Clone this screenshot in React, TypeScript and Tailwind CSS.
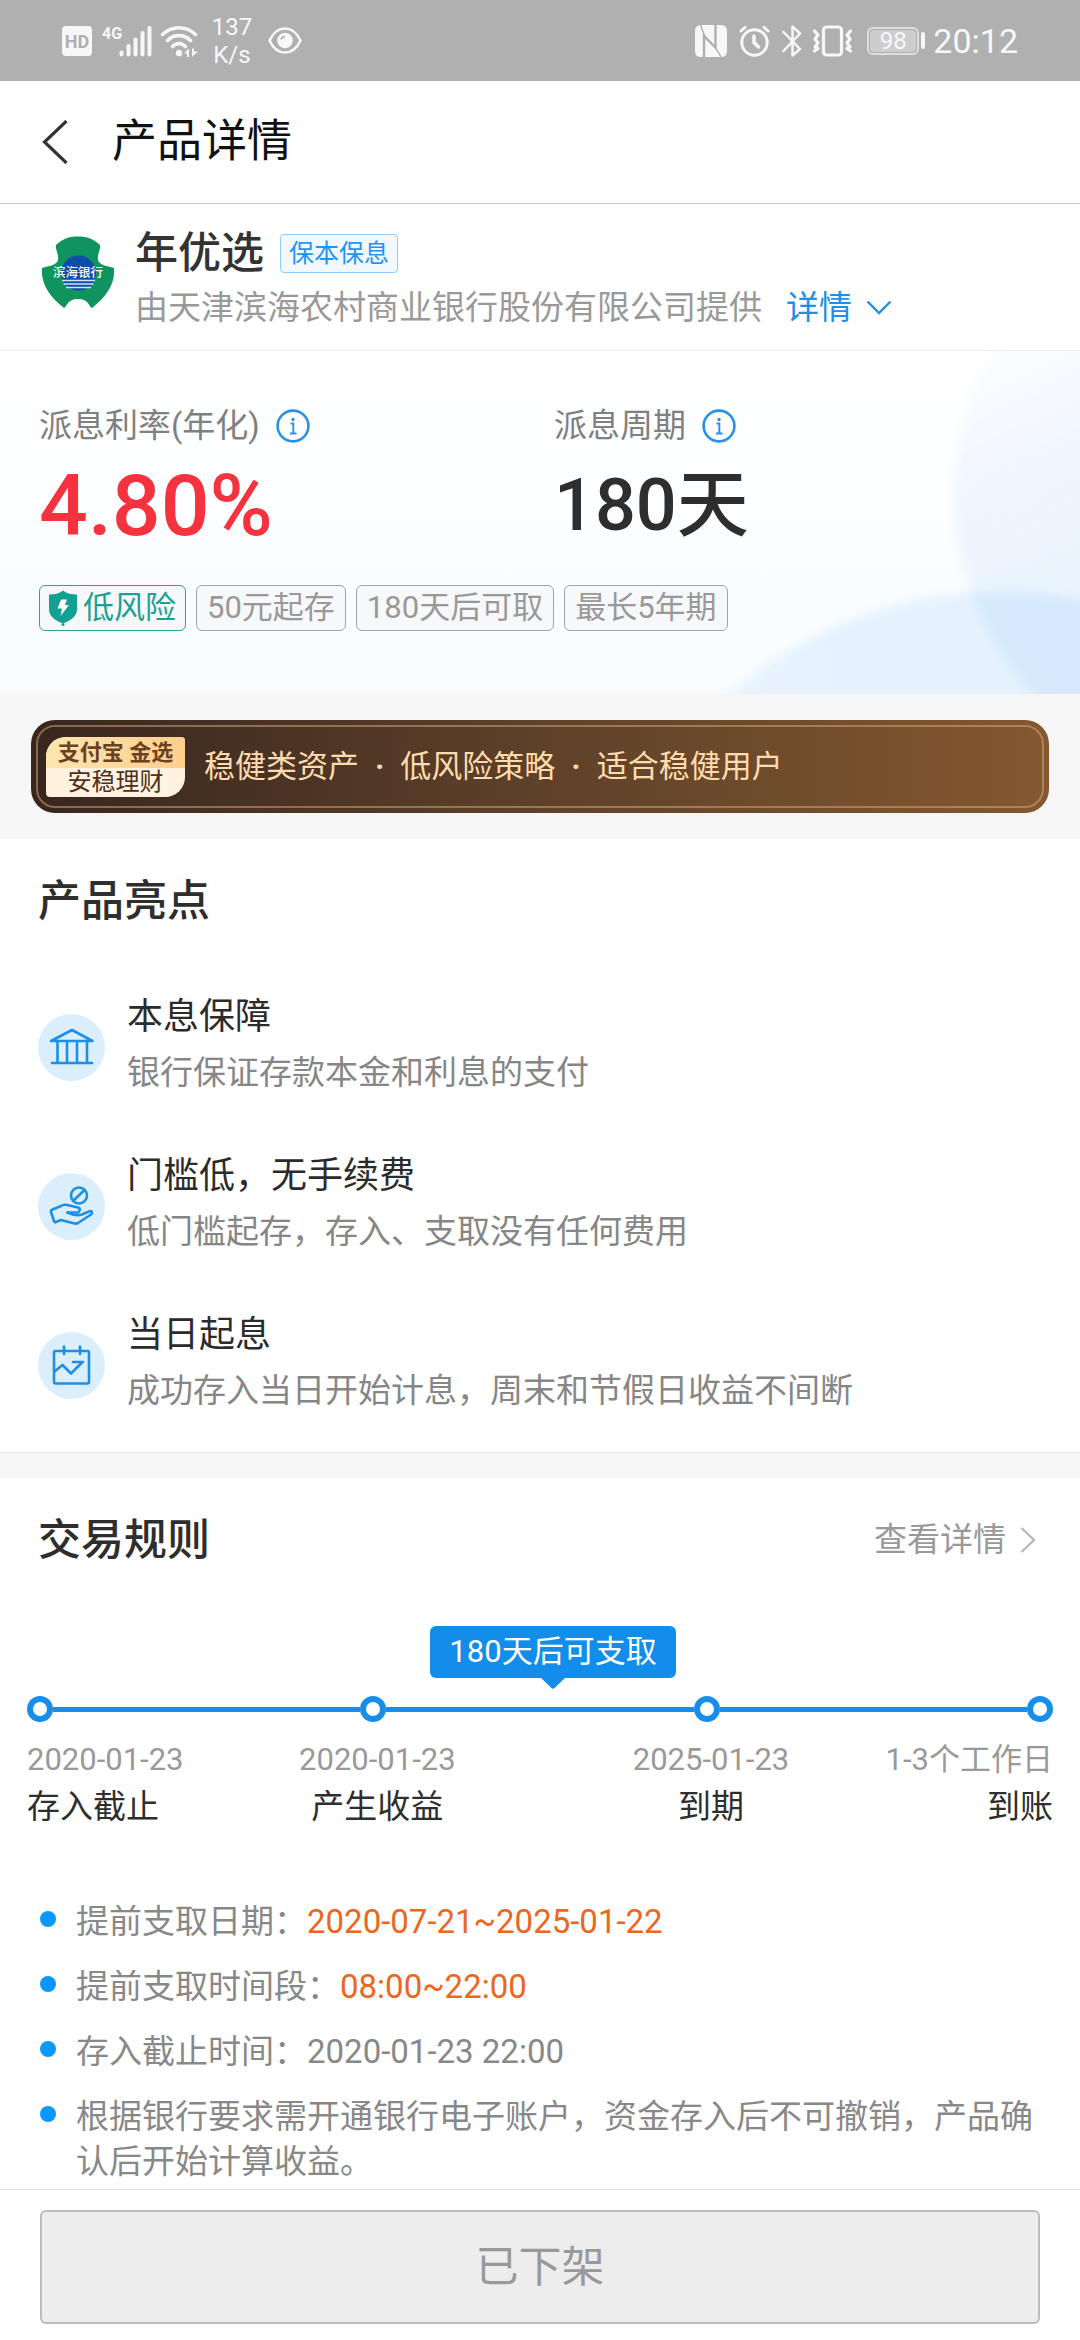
import type { ReactNode } from "react"

const tags = ["50元起存", "180天后可取", "最长5年期"]

const features = [
  {
    title: "本息保障",
    desc: "银行保证存款本金和利息的支付",
    icon: (
      <>
        <path d="M13 27 L34 16 L54.500 27 Z" />
        <path d="M19.500 27.500V48M29 27.500V48M39 27.500V48M49 27.500V48" />
        <path d="M14 49H54" />
      </>
    ),
  },
  {
    title: "门槛低，无手续费",
    desc: "低门槛起存，存入、支取没有任何费用",
    icon: (
      <>
        <circle cx="41" cy="22.500" r="8" />
        <path d="M35.500 27.500L46.500 17" />
        <path d="M41 38.500C42.500 36.500 42 35 40 34.500L28 31.800C26 31.400 24.500 32 23 33L14.500 36.500C13 37 12.800 38 13 39L16.200 48.500C16.500 49.500 17.300 49.500 18 49L23 47L36.500 50.500C38 50.800 39 50.500 40 50L53 41.500C55 40 54 37.500 51.500 38.200L44 41.500C40 42.800 36 42.500 29.500 39.500" />
        <path d="M29.500 39.500H40" />
      </>
    ),
  },
  {
    title: "当日起息",
    desc: "成功存入当日开始计息，周末和节假日收益不间断",
    icon: (
      <>
        <rect x="16" y="19" width="35" height="32.500" rx="1.500" />
        <path d="M26 14.500V22M42 14.500V22" />
        <path d="M16.500 39.500L24.500 33L33 41.500L44.500 30M35 30H45" />
      </>
    ),
  },
]

const steps = [
  { date: "2020-01-23", label: "存入截止", align: "items-start" },
  { date: "2020-01-23", label: "产生收益", align: "items-center" },
  { date: "2025-01-23", label: "到期", align: "items-center" },
  { date: "1-3个工作日", label: "到账", align: "items-end" },
]

const rules = [
  { label: "提前支取日期：", value: "2020-07-21~2025-01-22", highlight: true },
  { label: "提前支取时间段：", value: "08:00~22:00", highlight: true },
  { label: "存入截止时间：", value: "2020-01-23 22:00", highlight: false },
  {
    label: "根据银行要求需开通银行电子账户，资金存入后不可撤销，产品确认后开始计算收益。",
    value: "",
    highlight: false,
  },
]

function StatusBar() {
  return (
    <div className="flex h-[81px] items-center justify-between bg-[#b0b0b0] px-[62px] text-[#f7f7f7]">
      <div className="flex items-center">
        <svg className="h-[30px] w-[30px]" viewBox="0 0 30 30">
          <rect width="30" height="30" rx="4" fill="#f7f7f7" />
          <text x="15" y="21.500" textAnchor="middle" fontSize="18" fontWeight="700" fill="#b0b0b0">HD</text>
        </svg>
        <svg className="ml-2.5 h-8 w-[50px]" viewBox="0 0 50 32" fill="#f7f7f7">
          <text x="0" y="14" fontSize="16" fontWeight="700">4G</text>
          <rect x="17.500" y="25.500" width="4" height="6" rx="2" />
          <rect x="24.500" y="19" width="4" height="12.500" rx="2" />
          <rect x="31.500" y="12.500" width="4" height="19" rx="2" />
          <rect x="38.500" y="6" width="4" height="25.500" rx="2" />
          <rect x="45.500" y="1" width="4" height="30.500" rx="2" />
        </svg>
        <svg className="ml-2 h-8 w-[38px]" viewBox="0 0 38 32" fill="none" stroke="#f7f7f7" strokeWidth="3.600" strokeLinecap="round">
          <path d="M2.500 9.500C12 0.500 26 0.500 35.500 9.500" />
          <path d="M7.500 15.500C14 9 24 9 30.500 15.500" />
          <path d="M12.500 21.500C16.500 17.500 21.500 17.500 25.500 21.500" />
          <circle cx="19" cy="28" r="3.200" fill="#f7f7f7" stroke="none" />
          <path d="M24 28.500L29 23.500V32H27V28.500ZM32 23.500V32L38 26.500H34V23.500Z" fill="#f7f7f7" stroke="none" />
        </svg>
        <div className="ml-3.5 flex w-10 flex-col items-center text-2xl leading-7">
          <span>137</span>
          <span>K/s</span>
        </div>
        <svg className="ml-4 h-[27px] w-[34px]" viewBox="0 0 34 27">
          <path d="M1.500 13.500C5 6 10.500 1.500 17 1.500S29 6 32.500 13.500C29 21 23.500 25.500 17 25.500S5 21 1.500 13.500Z" fill="none" stroke="#f7f7f7" strokeWidth="2.600" />
          <circle cx="17" cy="13.500" r="7.800" fill="#f7f7f7" />
          <path d="M13 12.500A4.500 4.500 0 0 1 17 9.500" fill="none" stroke="#b0b0b0" strokeWidth="1.600" />
        </svg>
      </div>

      <div className="flex items-center">
        <svg className="h-8 w-8" viewBox="0 0 32 32" fill="none">
          <rect width="32" height="32" rx="5.500" fill="#f7f7f7" />
          <path d="M9 32V11L20.500 22.500V0" stroke="#b0b0b0" strokeWidth="2.400" />
          <path d="M5.500 0L10 12M20 21.500L26 32" stroke="#b0b0b0" strokeWidth="1.500" />
        </svg>
        <svg className="ml-3 h-8 w-[31px]" viewBox="0 0 31 32" fill="none" stroke="#f7f7f7" strokeWidth="3" strokeLinecap="round">
          <circle cx="15.500" cy="17.500" r="12.700" />
          <path d="M15 11V17.500L19.500 22" strokeWidth="3.500" />
          <path d="M2 6L6 2.300M29 6L25 2.300" />
        </svg>
        <svg className="ml-3 h-8 w-5" viewBox="0 0 20 32" fill="none" stroke="#f7f7f7" strokeWidth="2.500" strokeLinejoin="round" strokeLinecap="round">
          <path d="M1.500 7L18 24L10.500 30.500V1.500L18 8.500L1.500 26" />
        </svg>
        <svg className="ml-2.5 h-8 w-[41px]" viewBox="0 0 41 32" fill="none" stroke="#f7f7f7" strokeWidth="3.200" strokeLinecap="round" strokeLinejoin="round">
          <rect x="11.500" y="2" width="18" height="28" rx="3" />
          <path d="M2.500 6L6 10L3 14L6 18L3 22L6 23.500L2.500 26" />
          <path d="M38.500 6L35 10L38 14L35 18L38 22L35 23.500L38.500 26" />
        </svg>
        <div className="ml-3.5 flex items-center gap-0.5">
          <div className="flex h-7 w-[52px] items-center rounded-md border-2 border-[#dedede] p-px">
            <span className="flex h-full w-full items-center justify-center rounded-sm bg-[#cdcdcd] text-2xl leading-none">98</span>
          </div>
          <span className="h-[17px] w-1 rounded-sm bg-[#f7f7f7]" />
        </div>
        <span className="ml-2 text-[34px] leading-none">20:12</span>
      </div>
    </div>
  )
}

function InfoButton({ label }: { label: string }) {
  return (
    <button type="button" aria-label={label} className="h-[34px] w-[34px]">
      <svg viewBox="0 0 34 34" fill="none" stroke="#2a92e6">
        <circle cx="17" cy="17" r="15.400" strokeWidth="2.600" />
        <circle cx="17" cy="10.500" r="1.700" fill="#2a92e6" stroke="none" />
        <path d="M14.500 14.500H17.300V24.500M14 24.500H20.500" strokeWidth="1.900" />
      </svg>
    </button>
  )
}

function BankLogo() {
  return (
    <svg className="h-[74px] w-[74px] shrink-0" viewBox="0 0 74 74">
      <path
        d="M15 9C21 3 28 .5 37 .5S53 3 59 9C60 13 56 18 57 24C58 29 66 30 73 32C74.500 48 65 61 51 72C48 71 48 63 37 63S26 71 23 72C9 61 -.5 48 1 32C8 30 16 29 17 24C18 18 14 13 15 9Z"
        fill="#0e945c"
      />
      <circle cx="37.500" cy="37" r="17.500" fill="#0f4ea8" />
      <path d="M21 44.500H54M22.500 48H52.500M25 51.500H50" stroke="#cfe3f5" strokeWidth="1.300" />
      <text x="37" y="41" textAnchor="middle" fontSize="12.500" fontWeight="500" fill="#fff">滨海银行</text>
    </svg>
  )
}

function SectionTitle({ children }: { children: ReactNode }) {
  return <h2 className="text-[43px] leading-[60px] font-medium text-[#2e2e2e]">{children}</h2>
}

export default function App() {
  return (
    <div className="flex min-h-screen flex-col bg-white font-['Roboto','Noto_Sans_CJK_SC',sans-serif]">
      <StatusBar />

      <header className="flex h-[123px] items-center border-b border-[#c8c8c8] pl-[38px]">
        <button type="button" aria-label="返回" className="p-1">
          <svg className="h-11 w-[26px]" viewBox="0 0 26 44" fill="none" stroke="#333" strokeWidth="3.200">
            <path d="M24.500 1L2.500 22L24.500 43" />
          </svg>
        </button>
        <h1 className="ml-10 text-[45px] leading-[60px] text-[#111]">产品详情</h1>
      </header>

      {/* Issuer */}
      <section className="flex gap-5 border-b border-[#ebebeb] pt-6 pb-5 pl-[41px]">
        <div className="pt-2">
          <BankLogo />
        </div>
        <div>
          <div className="flex items-center gap-4">
            <h2 className="text-[43px] leading-[50px] font-medium text-[#333]">年优选</h2>
            <span className="rounded-sm border border-[#8fcbfb] bg-[#f1f9ff] px-2 text-[25px] leading-[37px] text-[#1e96f5]">
              保本保息
            </span>
          </div>
          <div className="mt-2 flex items-center text-[33px] leading-[44px]">
            <p className="text-[#999]">由天津滨海农村商业银行股份有限公司提供</p>
            <a href="#issuer" className="ml-6 flex items-center gap-3.5 text-[#1f8fe8]">
              详情
              <svg className="h-4 w-[26px]" viewBox="0 0 26 16" fill="none" stroke="#1f8fe8" strokeWidth="2.400">
                <path d="M1.500 1.500L13 13L24.500 1.500" />
              </svg>
            </a>
          </div>
        </div>
      </section>

      {/* Rate and period */}
      <section className="relative overflow-hidden bg-linear-to-b from-white to-[#f8fcff] px-[39px] pt-[53px] pb-[63px]">
        <svg className="absolute top-0 right-0 h-full w-auto" viewBox="0 0 400 343" fill="none">
          <defs>
            <linearGradient id="orb" gradientUnits="userSpaceOnUse" x1="290" y1="0" x2="400" y2="200">
              <stop offset="0" stopColor="#6fa2f0" stopOpacity="0.020" />
              <stop offset="0.600" stopColor="#6fa2f0" stopOpacity="0.090" />
              <stop offset="1" stopColor="#6fa8ee" stopOpacity="0.110" />
            </linearGradient>
            <linearGradient id="hill" x1="0" y1="0" x2="1" y2="0">
              <stop offset="0" stopColor="#ebf4fe" />
              <stop offset="0.300" stopColor="#e5f2fe" />
            </linearGradient>
            <filter id="soft">
              <feGaussianBlur stdDeviation="5" />
            </filter>
          </defs>
          <circle cx="320" cy="642" r="402" fill="url(#hill)" filter="url(#soft)" />
          <circle cx="575" cy="144" r="300" fill="url(#orb)" filter="url(#soft)" />
        </svg>
        <div className="relative">
          <div className="grid grid-cols-2 gap-7">
            <div>
              <div className="flex items-center gap-4">
                <span className="text-[33px] leading-[44px] text-[#808080]">派息利率(年化)</span>
                <InfoButton label="派息利率说明" />
              </div>
              <p className="mt-4 text-[86px] leading-[84px] font-medium text-[#f5333f]">4.80%</p>
            </div>
            <div>
              <div className="flex items-center gap-4">
                <span className="text-[33px] leading-[44px] text-[#808080]">派息周期</span>
                <InfoButton label="派息周期说明" />
              </div>
              <p className="mt-4 text-[72px] leading-[84px] font-medium text-[#2e2e2e]">180天</p>
            </div>
          </div>
          <div className="mt-[37px] flex gap-2.5 text-[31px] leading-[44px]">
            <span className="flex items-center gap-1.5 rounded-md border border-[#2ba396] bg-[#f6f8fa] px-[9px] text-[#1f9f92]">
              <svg className="h-9 w-[28px]" viewBox="0 0 28 36">
                <path d="M14 0.500C18 3.500 22 4.500 28 4.500V19C28 26 23 30 14 33.500C5 30 0 26 0 19V4.500C6 4.500 10 3.500 14 0.500Z" fill="#12a092" />
                <circle cx="14" cy="34.500" r="1.500" fill="#12a092" />
                <path d="M12 9.500H18L16 15H20L11.500 26L13 18.500H8.500Z" fill="#fff" />
              </svg>
              低风险
            </span>
            {tags.map((tag) => (
              <span key={tag} className="rounded-md border border-[#a3a3a3] bg-[#f7f8fa] px-2.5 text-[#999]">
                {tag}
              </span>
            ))}
          </div>
        </div>
      </section>

      {/* Gold selection banner */}
      <div className="bg-[#f6f6f6] px-[31px] py-[26px]">
        <div className="rounded-[24px] bg-linear-to-r from-[#38261f] via-[#5e4129] to-[#84582f] p-[5px]">
          <div className="flex h-[83px] items-center rounded-[19px] border-2 border-[#d8ae80]/50 pl-2">
            <div className="w-[139px] overflow-hidden rounded-tl-[20px] rounded-tr-sm rounded-br-[20px] rounded-bl-sm bg-[#fff3e0] text-center text-[#4b2f20]">
              <p className="bg-linear-to-r from-[#ffe5b0] to-[#ffce8d] text-[22px] leading-[31px] font-bold text-[#6b4220]">
                支付宝 金选
              </p>
              <p className="text-2xl leading-[29px]">安稳理财</p>
            </div>
            <p className="ml-[19px] flex gap-4 text-[31px] leading-[44px] text-[#ffdcae]">
              <span>稳健类资产</span>
              <span className="font-bold">·</span>
              <span>低风险策略</span>
              <span className="font-bold">·</span>
              <span>适合稳健用户</span>
            </p>
          </div>
        </div>
      </div>

      {/* Highlights */}
      <section className="px-[38px] pt-8 pb-[31px]">
        <SectionTitle>产品亮点</SectionTitle>
        <ul className="mt-[61px] flex flex-col gap-12">
          {features.map((feature) => (
            <li key={feature.title} className="flex items-center gap-[22px]">
              <svg
                className="h-[67px] w-[67px] shrink-0"
                viewBox="0 0 67 67"
                fill="none"
                stroke="#1e8fe6"
                strokeWidth="2.600"
                strokeLinecap="round"
                strokeLinejoin="round"
              >
                <circle cx="33.500" cy="33.500" r="33.500" fill="#dbeefc" stroke="none" />
                {feature.icon}
              </svg>
              <div className="pb-2">
                <h3 className="text-4xl leading-[50px] text-[#2b2b2b]">{feature.title}</h3>
                <p className="mt-[9px] text-[33px] leading-[44px] text-[#868686]">{feature.desc}</p>
              </div>
            </li>
          ))}
        </ul>
      </section>

      <div className="h-[26px] border-t border-[#e8e8e8] bg-[#f6f6f6]" />

      {/* Trading rules */}
      <section className="flex-1 pt-8 pb-1">
        <div className="flex items-center justify-between pr-11 pl-[38px]">
          <SectionTitle>交易规则</SectionTitle>
          <a href="#rules" className="flex items-center gap-3.5 text-[33px] leading-[44px] text-[#999]">
            查看详情
            <svg className="h-[26px] w-4" viewBox="0 0 16 26" fill="none" stroke="#b8b8b8" strokeWidth="2.400">
              <path d="M1.500 1L14 13L1.500 25" />
            </svg>
          </a>
        </div>

        <div className="mt-14 px-[27px]">
          <div className="flex justify-center pl-[26px]">
            <div className="relative rounded-md bg-[#128dea] px-[19px] text-[31px] leading-[52px] text-white">
              180天后可支取
              <svg className="absolute top-full left-1/2 h-[11px] w-6 -translate-x-1/2" viewBox="0 0 24 11">
                <path d="M0 0H24L13.500 10Q12 11.500 10.500 10Z" fill="#128dea" />
              </svg>
            </div>
          </div>
          <div className="mt-[18px] flex items-center">
            {steps.map((step, index) => (
              <div key={index} className={index === 0 ? "flex items-center" : "flex flex-1 items-center"}>
                {index > 0 && <span className="h-[5px] flex-1 bg-[#178eea]" />}
                <span className="h-[26px] w-[26px] rounded-full border-6 border-[#178eea]" />
              </div>
            ))}
          </div>
          <div className="mt-4 grid grid-cols-[22fr_40fr_40fr_21fr]">
            {steps.map((step, index) => (
              <div key={index} className={`flex flex-col gap-[3px] leading-[44px] whitespace-nowrap ${step.align}`}>
                <span className="text-[31px] text-[#999]">{step.date}</span>
                <span className="text-[33px] text-[#2e2e2e]">{step.label}</span>
              </div>
            ))}
          </div>
        </div>

        <ul className="mt-[70px] flex flex-col gap-5 px-10 text-[33px] leading-[45px] text-[#888]">
          {rules.map((rule) => (
            <li key={rule.label} className="flex gap-5">
              <span className="mt-3 h-4 w-4 shrink-0 rounded-full bg-[#0a98ff]" />
              <p>
                {rule.label}
                <span className={rule.highlight ? "text-[#ec6620]" : ""}>{rule.value}</span>
              </p>
            </li>
          ))}
        </ul>
      </section>

      <footer className="border-t border-[#e2e2e2] px-10 pt-5 pb-4">
        <button
          type="button"
          disabled
          className="h-[114px] w-full rounded-md border-2 border-[#bbb] bg-[#ededed] text-[43px] text-[#999]"
        >
          已下架
        </button>
      </footer>
    </div>
  )
}
